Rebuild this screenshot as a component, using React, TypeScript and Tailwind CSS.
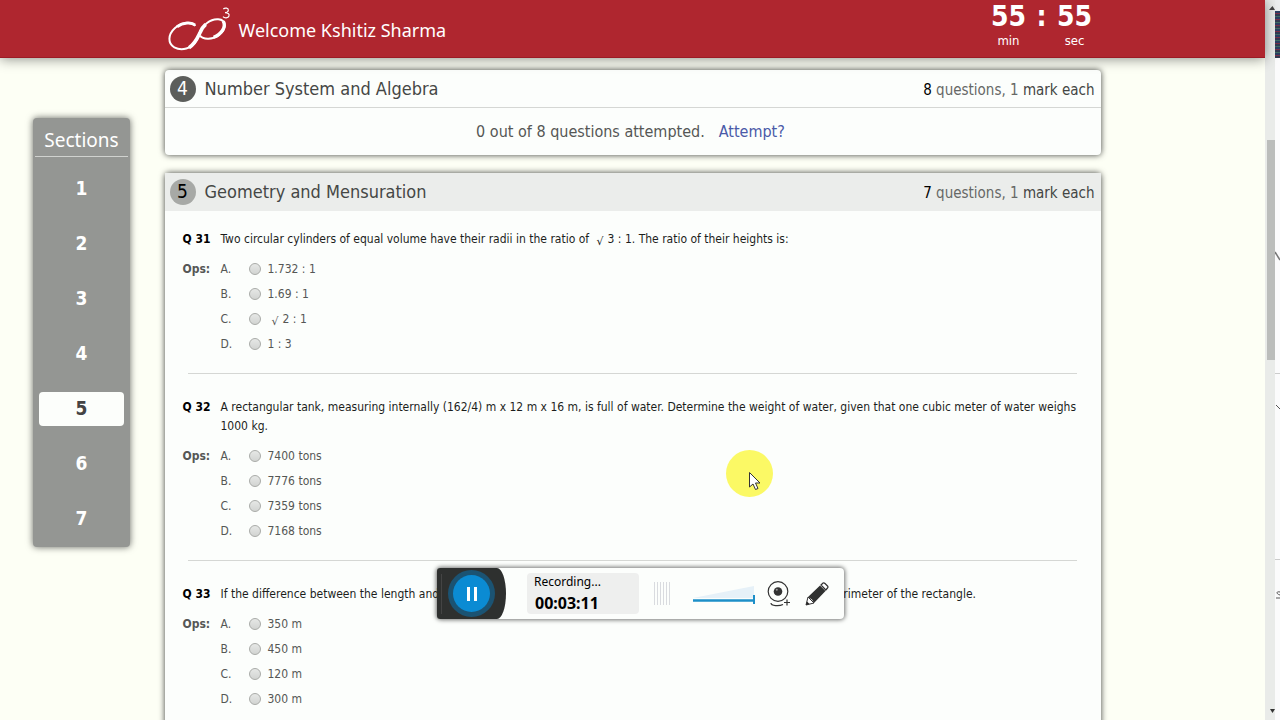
import { Fragment, type ReactNode } from 'react';

const sections = [1, 2, 3, 4, 5, 6, 7];

function Root() {
  return <span className="mx-1 align-[-2px] font-['DejaVu_Sans'] text-[11px] leading-none">√</span>;
}

const questions: { no: number; text: ReactNode; options: ReactNode[] }[] = [
  {
    no: 31,
    text: (
      <>
        Two circular cylinders of equal volume have their radii in the ratio of <Root />3 : 1. The ratio of their heights is:
      </>
    ),
    options: ['1.732 : 1', '1.69 : 1', <><Root />2 : 1</>, '1 : 3'],
  },
  {
    no: 32,
    text: 'A rectangular tank, measuring internally (162/4) m x 12 m x 16 m, is full of water. Determine the weight of water, given that one cubic meter of water weighs 1000 kg.',
    options: ['7400 tons', '7776 tons', '7359 tons', '7168 tons'],
  },
  {
    no: 33,
    text: 'If the difference between the length and the breadth of a rectangle is 125 m and its area is 7500 sq. m, find the perimeter of the rectangle.',
    options: ['350 m', '450 m', '120 m', '300 m'],
  },
];

function Logo() {
  return (
    <svg viewBox="18 21 192 138" className="h-[46px] w-16 shrink-0" fill="none" stroke="#fff" aria-hidden="true">
      <path
        d="M103 78 C94 64 62 66 42 84 C20 104 20 130 40 142 C62 154 92 146 106 122 C116 104 118 84 138 69 C158 53 190 53 191 75 C192 98 162 117 140 116 C128 116 121 112 117 107"
        strokeWidth="6"
      />
      <path d="M102 75 C92 65 66 67 48 80" strokeWidth="9" />
      <path d="M84 143 C104 130 110 112 118 96 C122 86 126 80 134 73" strokeWidth="11" />
      <path d="M187 64 C196 80 182 102 158 112" strokeWidth="10" />
      <path d="M187 27 C192 22 203 24 202 31 C201 37 196 38 192 38 C200 38 206 42 204 48 C202 55 190 55 186 50" strokeWidth="3.5" />
    </svg>
  );
}

function Header() {
  return (
    <header className="relative z-10 flex h-[58px] shrink-0 justify-center border-b border-[#9c1a25] bg-[#af262f] text-white shadow-[0_1px_12px_rgba(0,0,0,0.45)]">
      <div className="flex w-[936px] items-start justify-between">
        <div className="flex items-center gap-2 pt-[7px] pl-0.5">
          <Logo />
          <h1 className="font-['Noto_Sans'] text-[18px]">Welcome Kshitiz Sharma</h1>
        </div>
        <div className="flex pr-1.5 text-center">
          <div className="w-10">
            <div className="text-[28px] leading-[33px] font-bold">55</div>
            <div className="text-[13px] leading-4">min</div>
          </div>
          <div className="w-[26px] text-[28px] leading-[33px] font-bold">:</div>
          <div className="w-10">
            <div className="text-[28px] leading-[33px] font-bold">55</div>
            <div className="text-[13px] leading-4">sec</div>
          </div>
        </div>
      </div>
    </header>
  );
}

function SectionNav() {
  return (
    <nav className="mt-[60px] ml-[33px] h-[429px] w-[97px] rounded bg-[#949693] px-0.5 text-white shadow-[0_0_7px_rgba(0,0,0,0.6)]">
      <h2 className="mb-1 border-b border-[#d0d2cf] pt-1.5 text-center font-['Noto_Sans'] text-[19px] leading-8">Sections</h2>
      {sections.map((n) => (
        <div key={n} className="flex h-[55px] items-center px-1">
          <button
            className={`h-[34px] w-full text-[19px] font-bold ${n === 5 ? 'rounded-sm bg-[#fcfefb] text-[#444]' : ''}`}
          >
            {n}
          </button>
        </div>
      ))}
    </nav>
  );
}

function CardHeader({ no, title, count, active }: { no: number; title: string; count: number; active?: boolean }) {
  return (
    <div className={`flex h-[38px] items-center border-b pr-1.5 pl-[5px] ${active ? 'border-[#ebedeb] bg-[#ebedeb]' : 'border-[#d5d7d4]'}`}>
      <span className={`flex size-[26px] items-center justify-center rounded-full text-[19px] ${active ? 'bg-[#a7a9a6] text-black' : 'bg-[#5c5e5b] text-white'}`}>
        {no}
      </span>
      <h2 className="ml-[9px] text-[18px] text-[#454745]">{title}</h2>
      <p className="ml-auto pt-1 text-[15px] text-[#666866]">
        <span className="text-black">{count}</span> questions, 1 <span className="text-[#444644]">mark each</span>
      </p>
    </div>
  );
}

function Question({ no, text, options }: (typeof questions)[number]) {
  return (
    <article className="text-[12px]">
      <div className="grid grid-cols-[38px_1fr] pr-6 pl-[18px] leading-[19px]">
        <h3 className="font-bold text-black">Q {no}</h3>
        <p className="text-[#1c1e1c]">{text}</p>
      </div>
      <div className="mt-[7px] grid grid-cols-[38px_28px_1fr] items-center pl-[18px] text-[#555755]">
        {options.map((option, i) => {
          const id = `q${no}-${i}`;
          return (
            <Fragment key={id}>
              <span className="font-bold">{i === 0 && 'Ops:'}</span>
              <span>{'ABCD'[i]}.</span>
              <div className="flex h-[25px] items-center gap-[7px]">
                <input
                  type="radio"
                  id={id}
                  name={`q${no}`}
                  className="size-3 shrink-0 appearance-none rounded-full border border-[#a9aba8] bg-linear-to-b from-[#e6e8e6] to-[#d2d4d2]"
                />
                <label htmlFor={id}>{option}</label>
              </div>
            </Fragment>
          );
        })}
      </div>
      <hr className="mt-[17px] mr-6 mb-6 ml-[23px] border-[#d5d7d4]" />
    </article>
  );
}

function Recorder() {
  return (
    <div className="absolute top-[568px] left-[437px] z-20 flex h-[51px] w-[407px] items-center rounded bg-[#fcfefc] font-['Noto_Sans'] text-black shadow-[0_0_4px_1px_rgba(0,0,0,0.55)]">
      <div className="flex h-full w-[69px] items-center bg-[#2e302f] [border-radius:3px_9px_9px_3px/3px_50%_50%_3px]">
        <span className="ml-1 h-10 w-px bg-[#444]" />
        <button aria-label="Pause" className="ml-1.5 flex size-[47px] items-center justify-center rounded-full bg-[#1b5373]">
          <span className="flex size-[37px] items-center justify-center gap-1 rounded-full bg-[#0b8bd3]">
            <span className="h-[14px] w-[3px] bg-white" />
            <span className="h-[14px] w-[3px] bg-white" />
          </span>
        </button>
      </div>
      <div className="ml-[21px] h-[41px] w-[112px] rounded-sm bg-[#eeefee] pl-[7px]">
        <div className="text-[12px] leading-[18px]">Recording...</div>
        <div className="pl-px text-[16px] leading-6 font-bold">00:03:11</div>
      </div>
      <div className="ml-[15px] flex gap-0.5">
        {[0, 1, 2, 3, 4, 5].map((n) => (
          <span key={n} className="h-[23px] w-px bg-[#d9dbdf]" />
        ))}
      </div>
      <svg viewBox="0 0 62 20" className="ml-[23px] h-5 w-[62px]" aria-hidden="true">
        <path d="M0 14 L61 2 V14 Z" fill="#e6f1f8" />
        <path d="M0 16.5 H61" stroke="#1d8fc8" strokeWidth="2.5" />
        <path d="M61 11 V20" stroke="#1d8fc8" strokeWidth="2" />
      </svg>
      <button aria-label="Webcam" className="ml-3">
        <svg viewBox="0 0 24 26" className="h-[26px] w-6" fill="none" stroke="#333">
          <circle cx="11" cy="10.5" r="9.8" strokeWidth="1.2" />
          <circle cx="11" cy="10.5" r="4.3" fill="#333" stroke="none" />
          <circle cx="9.8" cy="8.8" r="1" fill="#999" stroke="none" />
          <path d="M4 22 C4 25 12 25.5 16 23.5 M17 21.5 H23 M20 18.5 V24.5" strokeWidth="1.2" />
        </svg>
      </button>
      <button aria-label="Draw" className="ml-3.5">
        <svg viewBox="0 0 24 24" className="size-6">
          <path d="M1 23 L3 15 L9 21 Z" fill="#fff" stroke="#333" />
          <path d="M1 23 L2 19.5 L4.5 22 Z" fill="#222" />
          <path d="M3 15 L15 3.5 L20.5 9 L9 21 L7 17.5 Z" fill="#303231" />
          <path d="M16 3 L18 1 Q19 0.5 20 1.5 L22.5 4 Q23.5 5 22.5 6 L20.8 8 Z" fill="#fff" stroke="#333" strokeWidth="1.2" />
        </svg>
      </button>
    </div>
  );
}

function Scrollbar() {
  return (
    <div className="flex w-2.5 shrink-0 flex-col items-end bg-[#e9ebe9]">
      <svg viewBox="0 0 8 6" className="mt-[5px] h-1.5 w-2" aria-hidden="true">
        <path d="M2 5 L5.5 1 L8 5 Z" fill="#444" />
      </svg>
      <div className="mt-[129px] h-[220px] w-2 bg-[#bbbdbb]" />
      <svg viewBox="0 0 8 6" className="mt-auto mb-1.5 h-1.5 w-2" aria-hidden="true">
        <path d="M3 1 L5.5 5 L8 1 Z" fill="#333" />
      </svg>
    </div>
  );
}

// strip of the window that sits behind the browser
function WindowEdge() {
  return (
    <div className="flex w-[5px] shrink-0 flex-col bg-[#fbfbfc]">
      <div className="h-[11px] bg-[#eceeee]" />
      <div className="h-[47px] bg-[repeating-linear-gradient(#2c3f63_0_2px,#7c3048_2px_3px,#333a52_3px_5px,#3f6d63_5px_6px)]" />
      <svg viewBox="0 0 5 662" className="h-[662px] w-[5px]" fill="none" stroke="#555" aria-hidden="true">
        <path d="M0 194 L5 202" stroke="#777" strokeWidth="1.5" />
        <path d="M0 315.5 H5 M0 501.5 H5" stroke="#ccc" />
        <path d="M1 347 L5 351" />
        <path d="M5 534 C1 533 1 536 5 537 M1 540 H5" />
      </svg>
    </div>
  );
}

export default function App() {
  return (
    <div className="relative flex h-screen overflow-hidden bg-[#fdfff5] font-['DejaVu_Sans_Condensed','DejaVu_Sans',sans-serif]">
      <div className="flex min-w-0 flex-1 flex-col">
        <Header />
        <div className="flex min-h-0 flex-1">
          <div className="flex-1">
            <SectionNav />
          </div>
          <main className="w-[936px] shrink-0 pt-3">
            <section className="rounded-sm bg-[#fcfefc] shadow-[0_0_6px_rgba(0,0,0,0.75)]">
              <CardHeader no={4} title="Number System and Algebra" count={8} />
              <p className="flex h-[47px] items-center justify-center gap-3.5 pr-1 text-[16px] text-[#555755]">
                0 out of 8 questions attempted.
                <a href="#attempt" className="text-[#4a5aa8]">Attempt?</a>
              </p>
            </section>
            <section className="mt-[18px] rounded-sm bg-[#fcfefc] shadow-[0_0_6px_rgba(0,0,0,0.75)]">
              <CardHeader no={5} title="Geometry and Mensuration" count={7} active />
              <div className="pt-[19px]">
                {questions.map((q) => (
                  <Question key={q.no} {...q} />
                ))}
              </div>
            </section>
          </main>
          <div className="flex-1" />
        </div>
      </div>
      <Scrollbar />
      <WindowEdge />
      <div className="absolute top-[450px] left-[726px] size-[47px] rounded-full bg-[#fbf965]" />
      <svg viewBox="0 0 12 19" className="absolute top-[472px] left-[749px] h-[19px] w-3" aria-hidden="true">
        <path d="M0.5 0.5 V15 L4 12 L6.5 17.5 L9 16.5 L6.5 11 H11 Z" fill="#fff" stroke="#333" />
      </svg>
      <Recorder />
    </div>
  );
}
